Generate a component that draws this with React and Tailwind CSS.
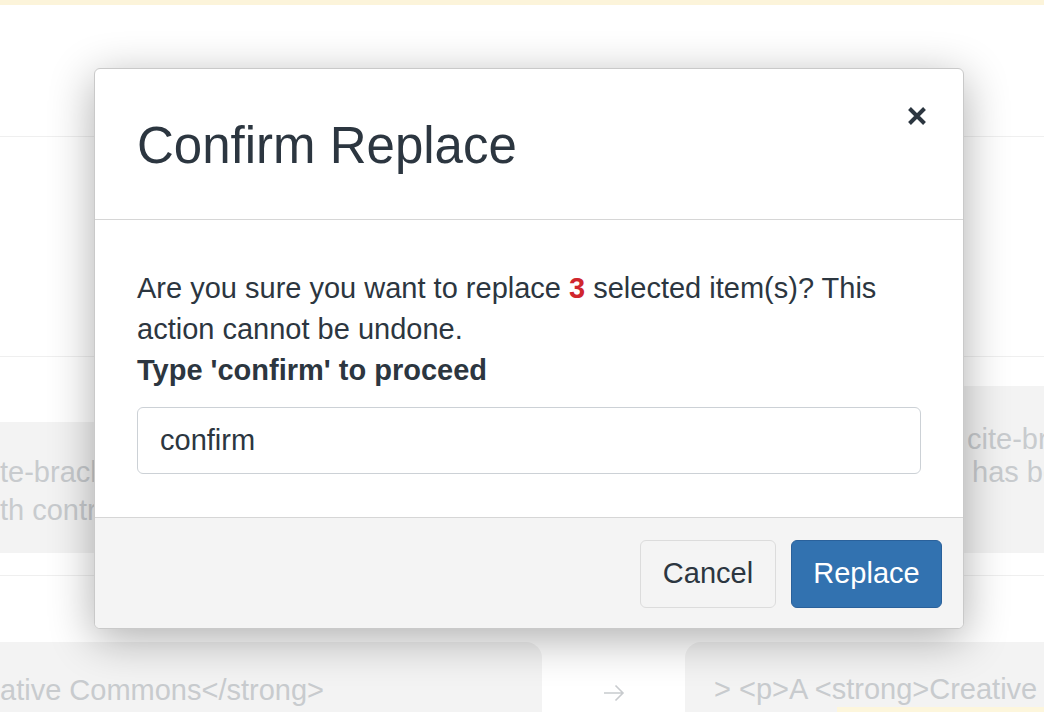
import React from "react";

export default function App() {
  return (
    <div className="relative w-full h-[712px] overflow-hidden bg-white font-['Liberation_Sans',Arial,sans-serif]">
      {/* background page */}
      <div className="h-[5px] bg-[#fcf4da]" />
      <div className="h-[132px] border-b border-[#efefef]" />
      <div className="h-[220px] border-b border-[#efefef]" />
      <div className="h-[219px] border-b border-[#efefef] flex justify-between items-end pb-[22px]">
        <div className="w-[560px] h-[131px] bg-[#f3f3f3] pt-[31px] text-[29px] leading-[38px] text-[#c8cbce] whitespace-nowrap">
          <div>te-bracket has been</div>
          <div>th contributors from</div>
        </div>
        <div className="w-[80px] h-[167px] bg-[#f3f3f3] pt-[37px] pl-[3px] text-[29px] leading-[33px] text-[#c8cbce] whitespace-nowrap overflow-hidden">
          <div>cite-bracket</div>
          <div className="pl-[5px]">has been</div>
        </div>
      </div>
      <div className="pt-[66px] flex">
        <div className="w-[542px] h-[80px] shrink-0 rounded-tr-[16px] bg-[#f3f3f3] pt-[30px] text-[29px] leading-[36px] text-[#c8cbce] whitespace-nowrap overflow-hidden">
          ative Commons&lt;/strong&gt;
        </div>
        <div className="w-[143px] shrink-0 flex justify-center pt-[42px]">
          <svg width="22" height="18" viewBox="0 0 22 18" fill="none">
            <path d="M1 9 H20 M12.5 1.5 L20 9 L12.5 16.5" stroke="#c8cbce" strokeWidth="1.6" />
          </svg>
        </div>
        <div className="flex-1 h-[80px] rounded-tl-[16px] bg-[#f3f3f3] pt-[30px] pl-[29px] text-[29px] leading-[35px] text-[#c8cbce] whitespace-nowrap overflow-hidden flex flex-col">
          <div>&gt; &lt;p&gt;A &lt;strong&gt;Creative</div>
          <div className="ml-[123px] h-[20px] bg-[#fdf6dc]" />
        </div>
      </div>

      {/* modal */}
      <div className="absolute left-[94px] top-[68px] w-[870px] bg-white border border-[#c9c9c9] rounded-[6px] shadow-[0_10px_45px_rgba(0,0,0,0.32)] text-[#2c3640] overflow-hidden">
        <div className="h-[151px] border-b border-[#d6d6d6] flex justify-between pl-[42px] pr-[37px]">
          <h4 className="self-center pt-[3px] text-[51px] leading-none font-normal">Confirm Replace</h4>
          <button className="self-start mt-[38px] w-[18px] h-[18px]">
            <svg width="18" height="18" viewBox="0 0 18 18">
              <path d="M1.5 1.5 L16.5 16.5 M16.5 1.5 L1.5 16.5" stroke="#2c3640" strokeWidth="4" />
            </svg>
          </button>
        </div>
        <div className="px-[42px] pt-[48px] pb-[43px] text-[29px] leading-[41px]">
          <p>
            Are you sure you want to replace <span className="font-bold text-[#d0262d]">3</span> selected item(s)? This action cannot be undone.
          </p>
          <p className="font-bold">Type 'confirm' to proceed</p>
          <input
            readOnly
            value="confirm"
            className="mt-[16px] w-full h-[67px] rounded-[6px] border border-[#ccd1d6] px-[22px] text-[29px] text-[#2c3640] bg-white outline-none font-['Liberation_Sans',Arial,sans-serif]"
          />
        </div>
        <div className="border-t border-[#d6d6d6] bg-[#f4f4f4] pt-[22px] pb-[20px] pr-[21px] flex justify-end gap-[15px]">
          <button className="w-[136px] h-[68px] rounded-[6px] border border-[#dcdcdc] bg-[#f4f4f4] text-[29px] text-[#2c3640]">Cancel</button>
          <button className="w-[151px] h-[68px] rounded-[6px] border border-[#2a619b] bg-[#3272b0] text-[29px] text-white">Replace</button>
        </div>
      </div>
    </div>
  );
}
